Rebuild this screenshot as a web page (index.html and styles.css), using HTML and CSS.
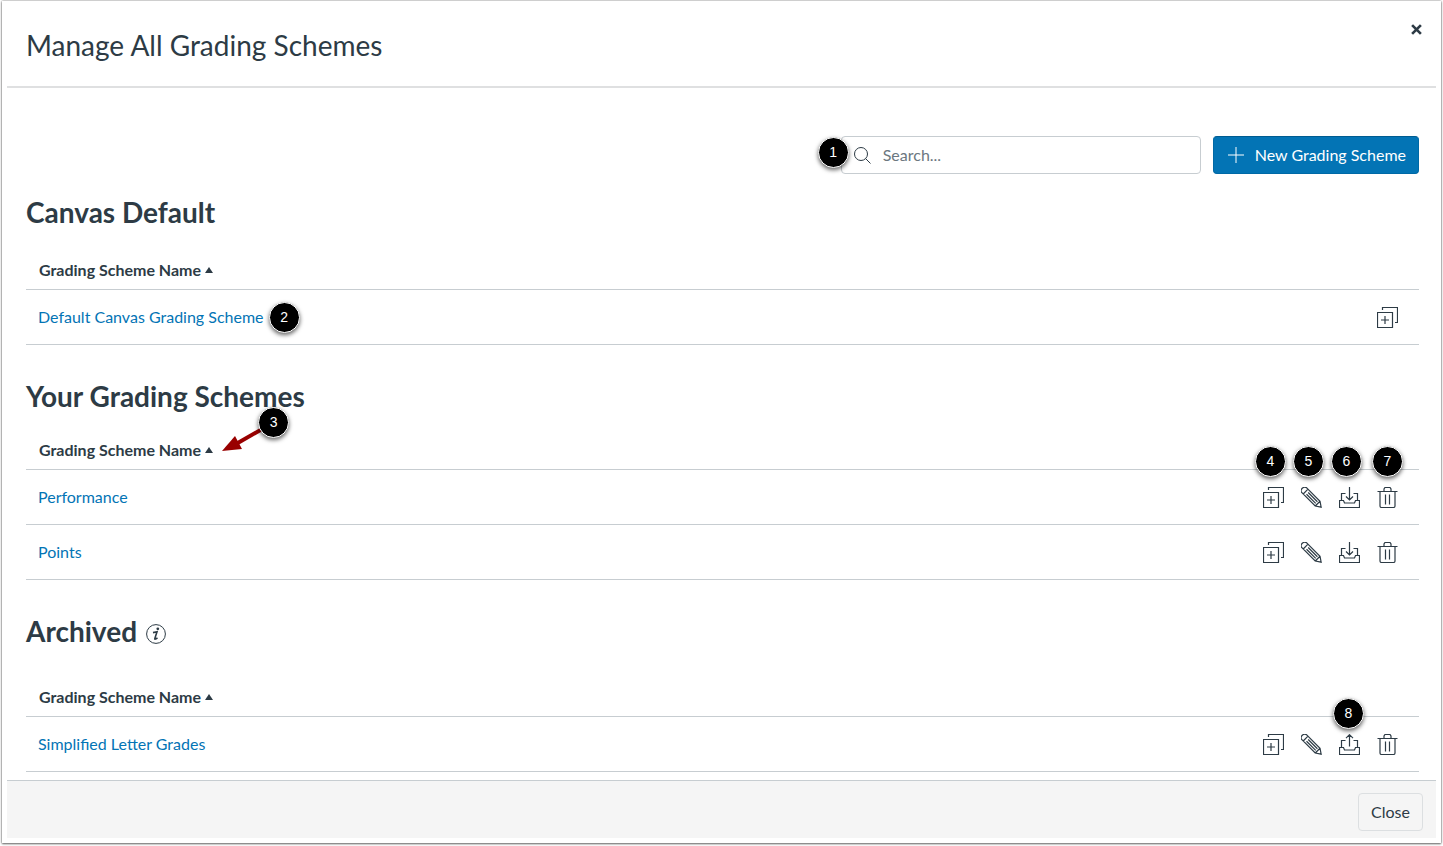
FILE: index.html
```
<!DOCTYPE html>
<html lang="en">
<head>
  <meta charset="UTF-8">
  <meta name="viewport" content="width=device-width, initial-scale=1">
  <title>Manage All Grading Schemes</title>
  <link rel="stylesheet" href="styles.css">
</head>
<body>

  <!-- Shared icons -->
  <svg class="sprite" aria-hidden="true">
    <symbol id="icon-duplicate" viewBox="0 0 21 21">
      <path d="M.5 5.5h15v15H.5zM5.5 3V.5h15v15H18M8 9v8M4 13h8"/>
    </symbol>
    <symbol id="icon-edit" viewBox="0 0 21 21">
      <g transform="rotate(45)">
        <path d="M5 -3.4H23.5L28.5 0L23.5 3.4H5Q1.8 3.4 1.8 0T5 -3.4zM6.5 -3.4V3.4M9 -1.2H22M9 1.2H22M23.5 -3.4V3.4"/>
      </g>
    </symbol>
    <symbol id="icon-archive" viewBox="0 0 21 21">
      <path d="M6.5 6.5H2.5v7M14.5 6.5h4v7M.5 13.5h4l1 2.5h10l1-2.5h4v7H.5zM10.500 0v12.500M7 9.500l3.500 3.500 3.500-3.500"/>
    </symbol>
    <symbol id="icon-unarchive" viewBox="0 0 21 21">
      <path d="M6.5 6.5H2.5v7M14.5 6.5h4v7M.5 13.5h4l1 2.5h10l1-2.5h4v7H.5zM10.500 12.500V.7M7 4.200L10.500 .7 14 4.200"/>
    </symbol>
    <symbol id="icon-trash" viewBox="0 0 21 21">
      <path d="M.5 4.500h20M7 4.500V2L8 .5h5L14 2v2.500M3 4.500v14.500q0 1.500 1.500 1.500h12q1.500 0 1.500-1.500V4.500M8.500 7.500v10M12.500 7.500v10"/>
    </symbol>
    <symbol id="icon-sort" viewBox="0 0 8 6">
      <path d="M4 0l4 6H0z"/>
    </symbol>
  </svg>

  <main class="modal">
    <header class="modal-header">
      <h1>Manage All Grading Schemes</h1>
      <button class="close-x" type="button" aria-label="Close">
        <svg viewBox="0 0 10 10"><path d="M1 1l8 8M9 1l-8 8"/></svg>
      </button>
    </header>

    <div class="modal-body">
      <div class="toolbar">
        <label class="search">
          <span class="badge badge-search">1</span>
          <svg class="search-icon" viewBox="0 0 17 17"><circle cx="7" cy="7" r="6.500"/><path d="M11.500 11.500l5 5"/></svg>
          <input type="text" placeholder="Search..." aria-label="Search">
        </label>
        <button class="new-button" type="button">
          <svg viewBox="0 0 16 16"><path d="M8 0v16M0 8h16"/></svg>
          New Grading Scheme
        </button>
      </div>

      <!-- Canvas Default -->
      <section class="schemes">
        <h2>Canvas Default</h2>
        <table>
          <thead>
            <tr>
              <th colspan="2"><button class="sort" type="button">Grading Scheme Name <svg><use href="#icon-sort"/></svg></button></th>
            </tr>
          </thead>
          <tbody>
            <tr>
              <td><a href="#">Default Canvas Grading Scheme<span class="badge badge-link">2</span></a></td>
              <td class="actions">
                <button type="button" aria-label="Duplicate"><svg><use href="#icon-duplicate"/></svg></button>
              </td>
            </tr>
          </tbody>
        </table>
      </section>

      <!-- Your Grading Schemes -->
      <section class="schemes schemes-own">
        <h2>Your Grading Schemes</h2>
        <table>
          <thead>
            <tr>
              <th colspan="2">
                <button class="sort" type="button">Grading Scheme Name <svg><use href="#icon-sort"/></svg>
                  <span class="pointer">
                    <svg viewBox="0 0 44 26"><path class="pointer-line" d="M42 1L14 17"/><path class="pointer-head" d="M0 24L13 9L20 22z"/></svg>
                    <span class="badge badge-sort">3</span>
                  </span>
                </button>
              </th>
            </tr>
          </thead>
          <tbody>
            <tr>
              <td><a href="#">Performance</a></td>
              <td class="actions">
                <button type="button" aria-label="Duplicate"><svg><use href="#icon-duplicate"/></svg><span class="badge badge-action">4</span></button>
                <button type="button" aria-label="Edit"><svg><use href="#icon-edit"/></svg><span class="badge badge-action">5</span></button>
                <button type="button" aria-label="Archive"><svg><use href="#icon-archive"/></svg><span class="badge badge-action">6</span></button>
                <button type="button" aria-label="Delete"><svg><use href="#icon-trash"/></svg><span class="badge badge-action badge-delete">7</span></button>
              </td>
            </tr>
            <tr>
              <td><a href="#">Points</a></td>
              <td class="actions">
                <button type="button" aria-label="Duplicate"><svg><use href="#icon-duplicate"/></svg></button>
                <button type="button" aria-label="Edit"><svg><use href="#icon-edit"/></svg></button>
                <button type="button" aria-label="Archive"><svg><use href="#icon-archive"/></svg></button>
                <button type="button" aria-label="Delete"><svg><use href="#icon-trash"/></svg></button>
              </td>
            </tr>
          </tbody>
        </table>
      </section>

      <!-- Archived -->
      <section class="schemes schemes-archived">
        <h2>Archived
          <button class="info" type="button" aria-label="About archived schemes">
            <svg viewBox="0 0 20 20"><circle cx="10" cy="10" r="9.400"/><path class="info-stem" d="M7 8.600l4-.8-2.200 6.800q-.2 1.400 2.700-.8"/><circle class="info-dot" cx="11.800" cy="4.800" r="1.400"/></svg>
          </button>
        </h2>
        <table>
          <thead>
            <tr>
              <th colspan="2"><button class="sort" type="button">Grading Scheme Name <svg><use href="#icon-sort"/></svg></button></th>
            </tr>
          </thead>
          <tbody>
            <tr>
              <td><a href="#">Simplified Letter Grades</a></td>
              <td class="actions">
                <button type="button" aria-label="Duplicate"><svg><use href="#icon-duplicate"/></svg></button>
                <button type="button" aria-label="Edit"><svg><use href="#icon-edit"/></svg></button>
                <button type="button" aria-label="Unarchive"><svg><use href="#icon-unarchive"/></svg><span class="badge badge-action badge-unarchive">8</span></button>
                <button type="button" aria-label="Delete"><svg><use href="#icon-trash"/></svg></button>
              </td>
            </tr>
          </tbody>
        </table>
      </section>
    </div>

    <footer class="modal-footer">
      <button class="close-button" type="button">Close</button>
    </footer>
  </main>

</body>
</html>
```
FILE: styles.css
```
* {
  box-sizing: border-box;
}

body {
  margin: 0;
  padding: 1px 2px 3px;
  min-height: 100vh;
  display: flex;
  background: #fff;
  color: #2d3b45;
  font-family: Lato, sans-serif;
  font-size: 16px;
  line-height: 24px;
}

button, input {
  font: inherit;
  color: inherit;
}

button {
  padding: 0;
  border: none;
  background: none;
  cursor: pointer;
}

svg {
  display: block;
  fill: none;
  stroke: currentColor;
}

.sprite {
  position: absolute;
  width: 0;
  height: 0;
}

.modal {
  flex: 1;
  display: flex;
  flex-direction: column;
  padding: 0 5px 5px;
  background: #fff;
  box-shadow: 0 0 2px rgba(0,0,0,0.5), 0 1px 2px rgba(0,0,0,0.5);
}

.modal-header {
  display: flex;
  justify-content: space-between;
  align-items: flex-start;
  padding: 22px 13px 18px 19px;
  border-bottom: 2px solid #dfe0e1;
}

h1 {
  margin: 0;
  font-size: 28px;
  line-height: 45px;
  font-weight: 400;
}

.close-x {
  padding: 1px;
}

.close-x svg {
  width: 11px;
  height: 11px;
  stroke-width: 2.4;
}

.modal-body {
  flex: 1;
  padding: 48px 17px 8px 19px;
}

.toolbar {
  display: flex;
  justify-content: flex-end;
  gap: 12px;
}

.search {
  position: relative;
  display: flex;
  align-items: center;
  gap: 12px;
  width: 360px;
  height: 38px;
  padding: 0 12px;
  border: 1px solid #c7cdd1;
  border-radius: 4px;
}

.search-icon {
  width: 17px;
  height: 17px;
}

.search input {
  flex: 1;
  min-width: 0;
  padding: 0;
  border: none;
  outline: none;
  background: none;
}

.search input::placeholder {
  color: #6b7780;
  opacity: 1;
}

.new-button {
  display: flex;
  align-items: center;
  gap: 11px;
  height: 38px;
  padding: 0 12px 0 14px;
  border: 1px solid #0069a6;
  border-top-color: #005c91;
  border-radius: 4px;
  background: #0374b5;
  color: #fff;
}

.new-button svg {
  width: 16px;
  height: 16px;
}

.schemes {
  margin-top: 34px;
}

.toolbar + .schemes {
  margin-top: 21px;
}

h2 {
  display: flex;
  align-items: center;
  gap: 9px;
  margin: 0 0 22px;
  font-size: 28px;
  line-height: 34px;
  font-weight: 700;
}

.schemes-own h2 {
  margin-bottom: 18px;
}

.schemes-archived h2 {
  margin-bottom: 30px;
}

.info {
  margin-top: 6px;
}

.info svg {
  width: 20px;
  height: 20px;
}

.info-stem {
  stroke-width: 1.6;
}

.info-dot {
  fill: currentColor;
  stroke: none;
}

table {
  width: 100%;
  border-collapse: separate;
  border-spacing: 0;
}

th, td {
  padding: 0 12px;
  border-bottom: 1px solid #c7cdd1;
  text-align: left;
}

th {
  height: 39px;
  padding-left: 13px;
}

td {
  height: 55px;
}

.sort {
  position: relative;
  display: flex;
  align-items: center;
  gap: 4px;
  font-weight: 700;
}

.sort > svg {
  width: 8px;
  height: 6px;
  fill: currentColor;
  stroke: none;
}

a {
  position: relative;
  color: #0374b5;
  text-decoration: none;
}

a:hover {
  text-decoration: underline;
}

.actions {
  padding-right: 13px;
  text-align: right;
  white-space: nowrap;
  font-size: 0;
}

.actions button {
  position: relative;
  width: 38px;
  height: 38px;
  vertical-align: middle;
}

.actions svg {
  width: 21px;
  height: 21px;
  margin: 0 auto;
  overflow: visible;
  stroke-width: 1.2;
}

/* Numbered callouts */
.badge {
  position: absolute;
  width: 31px;
  height: 31px;
  border: 1px solid #fff;
  border-radius: 50%;
  background: #000;
  box-shadow: 0 2px 4px rgba(0,0,0,0.6);
  color: #fff;
  font-family: "Liberation Sans", Arial, sans-serif;
  font-size: 14px;
  font-weight: 400;
  line-height: 29px;
  text-align: center;
}

.badge-search {
  left: -24px;
  top: 0;
}

.badge-link {
  left: 100%;
  top: -5px;
  margin-left: 5px;
}

.badge-action {
  left: 1px;
  top: -32px;
}

.badge-delete {
  left: 4px;
}

.badge-unarchive {
  left: 3px;
  top: -27px;
}

.pointer {
  position: absolute;
  left: 100%;
  top: -11px;
  margin-left: 9px;
}

.pointer > svg {
  width: 44px;
  height: 26px;
}

.pointer-line {
  stroke: #900;
  stroke-width: 4;
}

.pointer-head {
  fill: #900;
  stroke: none;
}

.badge-sort {
  left: 36px;
  top: -20px;
}

.modal-footer {
  display: flex;
  justify-content: flex-end;
  padding: 12px 13px 7px;
  border-top: 1px solid #c7cdd1;
  background: #f5f5f5;
}

.close-button {
  height: 38px;
  padding: 0 12px;
  border: 1px solid #dcdfe1;
  border-radius: 4px;
  background: #f5f5f5;
}
```
